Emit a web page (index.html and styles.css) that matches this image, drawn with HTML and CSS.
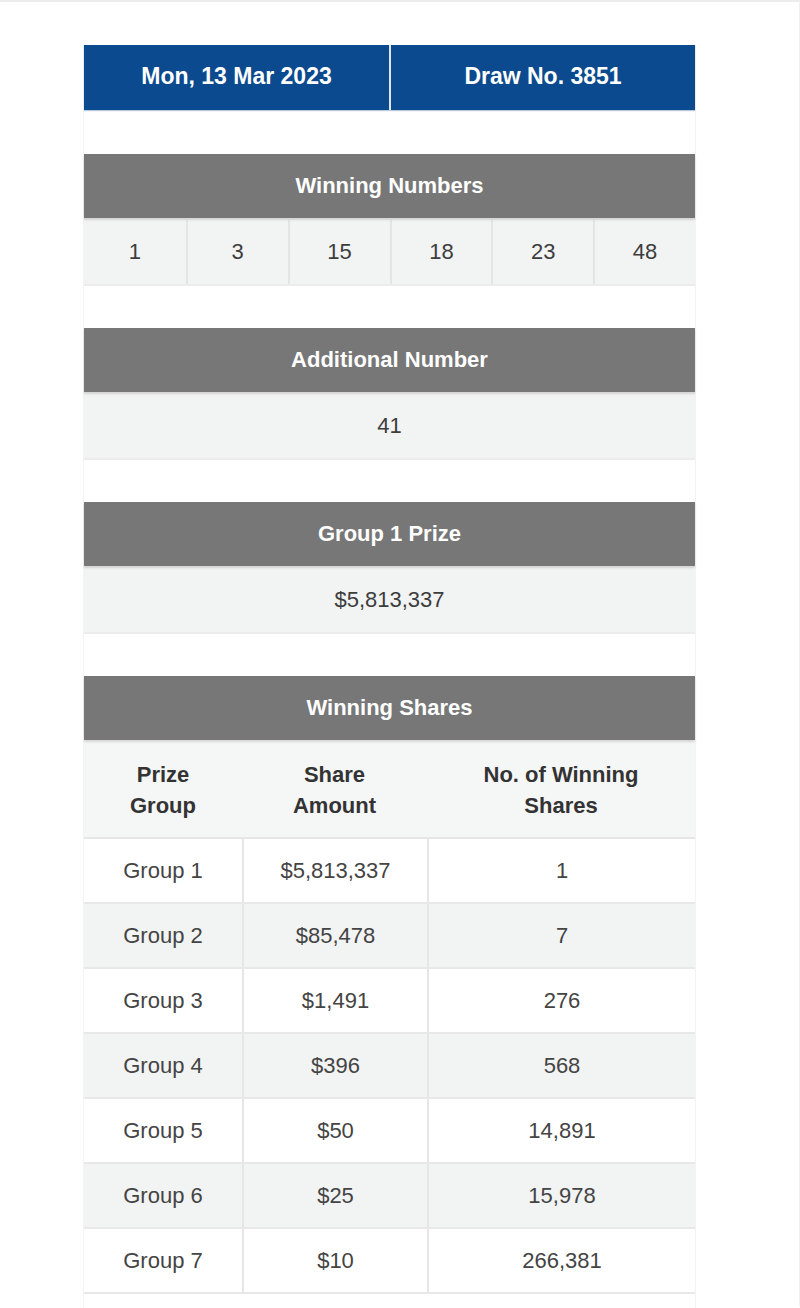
FILE: index.html
```html
<!DOCTYPE html>
<html>
<head>
<meta charset="utf-8">
<link rel="stylesheet" href="styles.css">
</head>
<body>
<div class="page">
  <div class="card">
    <div class="draw-head">
      <div class="draw-cell">Mon, 13 Mar 2023</div>
      <div class="draw-cell">Draw No. 3851</div>
    </div>
    <div class="gap"></div>

    <div class="sec-head">Winning Numbers</div>
    <div class="row nums">
      <div class="cell">1</div>
      <div class="cell">3</div>
      <div class="cell">15</div>
      <div class="cell">18</div>
      <div class="cell">23</div>
      <div class="cell">48</div>
    </div>
    <div class="gap"></div>

    <div class="sec-head">Additional Number</div>
    <div class="row single"><div class="cell">41</div></div>
    <div class="gap"></div>

    <div class="sec-head">Group 1 Prize</div>
    <div class="row single"><div class="cell">$5,813,337</div></div>
    <div class="gap"></div>

    <div class="sec-head">Winning Shares</div>
    <div class="shares-head">
      <div class="hcell">Prize<br>Group</div>
      <div class="hcell">Share<br>Amount</div>
      <div class="hcell">No. of Winning<br>Shares</div>
    </div>
    <div class="srow"><div class="cell">Group 1</div><div class="cell">$5,813,337</div><div class="cell">1</div></div>
    <div class="srow alt"><div class="cell">Group 2</div><div class="cell">$85,478</div><div class="cell">7</div></div>
    <div class="srow"><div class="cell">Group 3</div><div class="cell">$1,491</div><div class="cell">276</div></div>
    <div class="srow alt"><div class="cell">Group 4</div><div class="cell">$396</div><div class="cell">568</div></div>
    <div class="srow"><div class="cell">Group 5</div><div class="cell">$50</div><div class="cell">14,891</div></div>
    <div class="srow alt"><div class="cell">Group 6</div><div class="cell">$25</div><div class="cell">15,978</div></div>
    <div class="srow"><div class="cell">Group 7</div><div class="cell">$10</div><div class="cell">266,381</div></div>
    <div class="srow tail"></div>
  </div>
</div>
</body>
</html>
```
FILE: styles.css
```css
html, body {
  margin: 0;
  padding: 0;
  background: #ffffff;
}
body {
  font-family: "Liberation Sans", Arial, Helvetica, sans-serif;
  color: #444;
  height: 1308px;
  overflow: hidden;
}
.page {
  border-top: 2px solid #ececec;
  border-right: 1px solid #f1f1f1;
  height: 1306px;
  box-sizing: border-box;
  padding-top: 43px;
  padding-left: 83px;
}
.card {
  display: flex;
  flex-direction: column;
  border-left: 1px solid #f3f3f3;
  border-right: 1px solid #f3f3f3;
  box-sizing: border-box;
  width: 613px;
}
.draw-head {
  display: grid;
  grid-template-columns: 305px 306px;
  height: 65px;
  background: #0b4a8e;
  box-shadow: 0 1px 1px #b9c8da;
}
.draw-cell {
  display: flex;
  align-items: center;
  justify-content: center;
  color: #fff;
  font-weight: bold;
  font-size: 23px;
  padding-bottom: 2px;
}
.draw-cell + .draw-cell {
  border-left: 2px solid #dfe6ef;
}
.gap {
  height: 44px;
}
.sec-head {
  height: 64px;
  background: #777777;
  color: #fff;
  font-weight: bold;
  font-size: 22px;
  display: flex;
  align-items: center;
  justify-content: center;
  box-shadow: 0 2px 2px #d6d6d6;
  position: relative;
  z-index: 1;
}
.row {
  height: 68px;
  background: #f2f3f3;
  border-top: 2px solid #e6e6e6;
  border-bottom: 2px solid #ececec;
  box-sizing: border-box;
  display: grid;
  font-size: 22px;
  color: #3d3d3d;
}
.row + .gap {
  height: 42px;
}
.nums {
  grid-template-columns: repeat(6, 1fr);
}
.single {
  grid-template-columns: 1fr;
}
.cell {
  display: flex;
  align-items: center;
  justify-content: center;
}
.nums .cell + .cell {
  border-left: 2px solid #e4e4e4;
}
.shares-head {
  display: grid;
  grid-template-columns: 158px 185px 268px;
  height: 99px;
  background: #f5f6f6;
  border-bottom: 2px solid #e6e6e6;
  box-sizing: border-box;
  padding-top: 2px;
}
.hcell {
  display: flex;
  align-items: center;
  justify-content: center;
  text-align: center;
  font-weight: bold;
  font-size: 22px;
  line-height: 31px;
  color: #333;
}
.srow {
  display: grid;
  grid-template-columns: 158px 185px 268px;
  height: 65px;
  background: #fff;
  border-bottom: 2px solid #e8e8e8;
  box-sizing: border-box;
  font-size: 22px;
  color: #444;
}
.srow.alt {
  background: #f2f3f3;
}
.srow .cell + .cell {
  border-left: 2px solid #e6e6e6;
}
.srow.tail {
  border-bottom: none;
}
```
